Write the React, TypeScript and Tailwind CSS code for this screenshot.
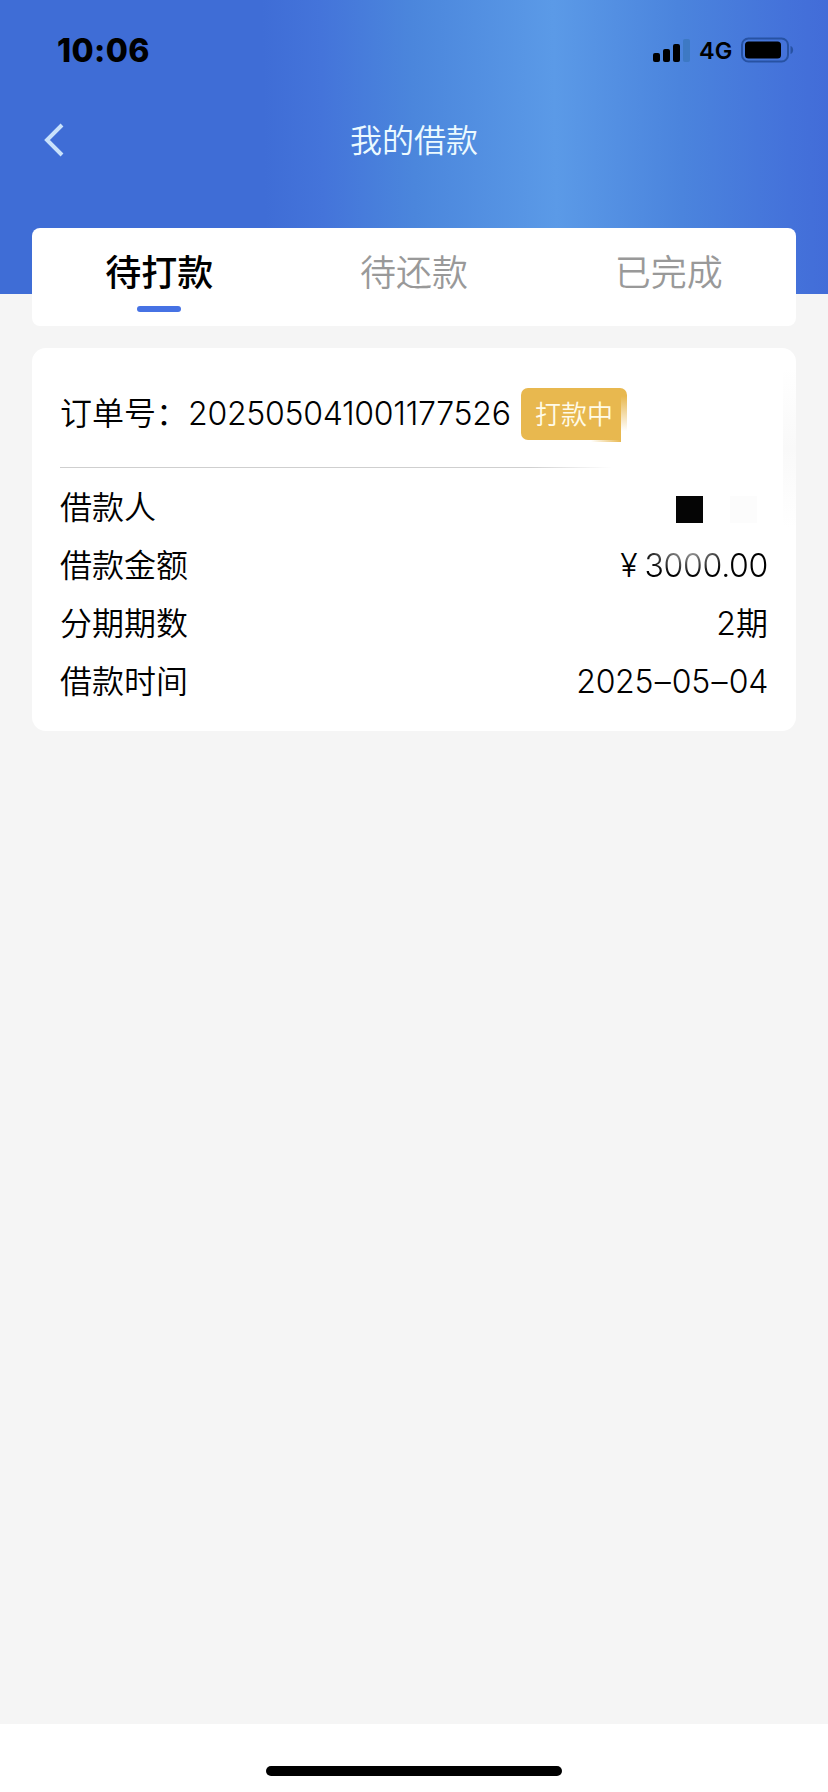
import React from "react";

const tabs = [
  { label: "待打款", active: true },
  { label: "待还款", active: false },
  { label: "已完成", active: false },
];

function StatusBar() {
  return (
    <div className="flex h-[100px] items-center justify-between pl-[57px] pr-[34px] text-black">
      <span className="pt-px text-[32px] font-extrabold leading-[40px] tracking-[0.4px]">10:06</span>
      <div className="flex items-center">
        <svg width="38" height="28" viewBox="0 0 38 28" className="shrink-0">
          <rect x="0" y="17" width="7" height="9" rx="2" />
          <rect x="10" y="13" width="7" height="13" rx="2" />
          <rect x="20" y="8" width="7" height="18" rx="2" />
          <rect x="30" y="3" width="7" height="23" rx="2" fill="#3d79c4" />
        </svg>
        <span className="w-[49px] pl-[8px] pt-px text-[23.5px] font-semibold leading-[32px]">4G</span>
        <svg width="54" height="28" viewBox="0 0 54 28" className="shrink-0">
          <rect x="2" y="2.500" width="46" height="23" rx="6.5" fill="none" stroke="#2752a3" strokeWidth="2" />
          <rect x="5" y="5.500" width="36" height="17" rx="3.5" />
          <path d="M50.500 10c3.500 1 3.500 7 0 8z" fill="#2752a3" />
        </svg>
      </div>
    </div>
  );
}

function Tabs() {
  return (
    <div className="grid h-[98px] grid-cols-3 rounded-[8px] bg-white">
      {tabs.map((t) => (
        <div key={t.label} className="flex flex-col items-center pt-[23px]">
          <span
            className={
              t.active
                ? "text-[36px] font-medium leading-[44px] text-black"
                : "text-[36px] font-[350] leading-[44px] text-[#999999]"
            }
          >
            {t.label}
          </span>
          {t.active && <span className="mt-[11px] h-[6px] w-[44px] rounded-full bg-[#4672e4]" />}
        </div>
      ))}
    </div>
  );
}

function Row({ label, children }: { label: string; children: React.ReactNode }) {
  return (
    <div className="flex h-[58px] items-center justify-between">
      <span>{label}</span>
      {children}
    </div>
  );
}

export default function App() {
  return (
    <div className="flex h-[1792px] w-[828px] flex-col bg-[#f5f5f5] font-['Inter','Noto_Sans_CJK_SC',sans-serif]">
      <header className="h-[294px] shrink-0 bg-[linear-gradient(89deg,#3f6dd6_0%,#3f6dd6_32%,#4474da_39%,#4b86dc_50%,#5b9ae7_67%,#4b84dd_82%,#4472da_95%,#426cd8_100%)]">
        <StatusBar />
        <div className="grid h-[80px] grid-cols-[80px_1fr_80px] items-center">
          <svg width="22" height="36" viewBox="0 0 22 36" className="ml-[43px]" fill="none">
            <path d="M19 3 4 18l15 15" stroke="#c9e2fb" strokeWidth="4" />
          </svg>
          <h1 className="pt-[2px] text-center text-[32px] font-[350] leading-[48px] text-[#ecfaff]">我的借款</h1>
        </div>
      </header>

      <main className="-mt-[66px] flex-1 px-[32px]">
        <Tabs />
        <section className="relative mt-[22px] h-[383px] rounded-[14px] bg-white px-[28px] text-[32px] font-[350] leading-[48px] text-black">
          <div className="flex h-[119px] items-center pt-[12px]">
            <span className="whitespace-nowrap pt-px">订单号：</span>
            <span className="w-[333px] whitespace-nowrap pt-px tracking-[-0.27px]">202505041001177526</span>
            <span className="relative flex h-[52px] w-[106px] items-center justify-center rounded-[7px] bg-[#e8b84f] pt-[2px] text-[26px] text-[#fffbe8]">
              打款中
              <span className="absolute right-0 top-[8px] h-[44px] w-[6px] bg-linear-to-b from-white/0 via-white via-80% to-white" />
              <span className="absolute right-[6px] bottom-[-2px] h-[8px] w-[30px] bg-linear-to-r from-[#e8b84f]/0 to-[#e8b84f]" />
            </span>
          </div>
          <div className="h-px w-[552px] bg-linear-to-r from-[#cfcfcf] from-85% to-white" />
          <div className="pt-[11px]">
            <Row label="借款人">
              <span className="mr-[11px] flex gap-[27px] pt-[3px]">
                <span className="size-[27px] bg-[#050505]" />
                <span className="size-[27px] bg-[#fcfcfc]" />
              </span>
            </Row>
            <Row label="借款金额">
              <span className="flex">
                <span className="mr-[7px]">¥</span>
                <span className="bg-[radial-gradient(ellipse_50px_26px_at_44px_8px,#aaaaaa,#000000)] bg-clip-text tracking-[-0.3px] text-transparent">
                  3000.00
                </span>
              </span>
            </Row>
            <Row label="分期期数">
              <span>2期</span>
            </Row>
            <Row label="借款时间">
              <span className="flex items-center tracking-[-0.3px]">
                2025<span className="mx-[1.5px]">–</span>05<span className="mx-[1.5px]">–</span>04
              </span>
            </Row>
          </div>
          <span className="absolute right-0 top-[20px] h-[160px] w-[13px] bg-linear-to-b from-white via-[#f9f9f9] to-white" />
        </section>
      </main>

      <footer className="flex h-[68px] shrink-0 justify-center bg-white pt-[42px]">
        <span className="h-[10px] w-[296px] rounded-full bg-black" />
      </footer>
    </div>
  );
}
